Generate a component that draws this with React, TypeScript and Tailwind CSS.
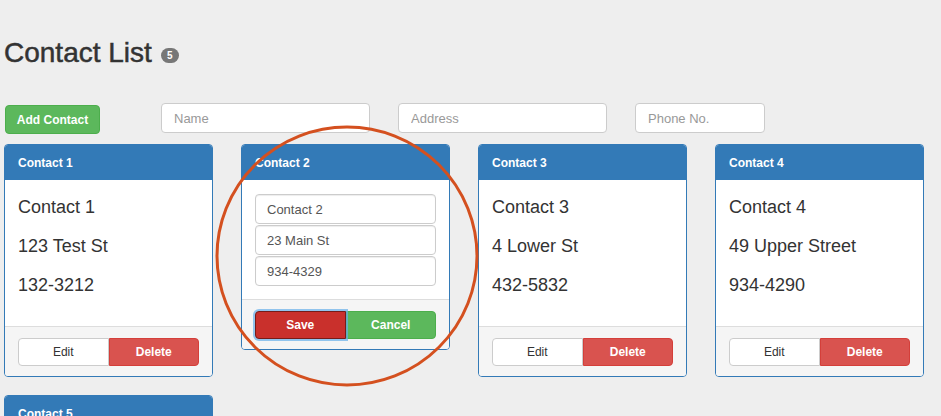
import React from 'react';

type Contact = { name: string; address: string; phone: string };

const contacts: Contact[] = [
  { name: 'Contact 1', address: '123 Test St', phone: '132-3212' },
  { name: 'Contact 2', address: '23 Main St', phone: '934-4329' },
  { name: 'Contact 3', address: '4 Lower St', phone: '432-5832' },
  { name: 'Contact 4', address: '49 Upper Street', phone: '934-4290' },
  { name: 'Contact 5', address: '', phone: '' },
];

const ViewCard = ({ c }: { c: Contact }) => (
  <div className="overflow-hidden rounded-[4px] border border-[#337ab7] bg-white">
    <div className="flex h-[35px] items-center bg-[#337ab7] px-[13px] text-[12px] font-bold text-white">{c.name}</div>
    <div className="px-[13px] pt-[8px] pb-[21px] text-[18px] text-[#333]">
      <div className="h-[39px] leading-[39px]">{c.name}</div>
      <div className="h-[39px] leading-[39px]">{c.address}</div>
      <div className="h-[39px] leading-[39px]">{c.phone}</div>
    </div>
    <div className="flex border-t border-[#dddddd] bg-[#f5f5f5] px-[13px] pt-[11px] pb-[10px]">
      <button className="h-[28px] flex-1 rounded-l-[4px] border border-[#cccccc] bg-white text-[12px] text-[#333]">Edit</button>
      <button className="h-[28px] flex-1 rounded-r-[4px] border border-[#d43f3a] bg-[#d9534f] text-[12px] font-bold text-white">Delete</button>
    </div>
  </div>
);

const EditCard = ({ c }: { c: Contact }) => (
  <div className="overflow-hidden rounded-[4px] border border-[#337ab7] bg-white">
    <div className="flex h-[35px] items-center bg-[#337ab7] px-[13px] text-[12px] font-bold text-white">{c.name}</div>
    <div className="flex flex-col gap-[1px] px-[13px] pt-[14px] pb-[13px]">
      {[c.name, c.address, c.phone].map((v) => (
        <input
          key={v}
          defaultValue={v}
          className="h-[30px] w-full rounded-[4px] border border-[#cccccc] bg-white pl-[11px] text-[13px] text-[#555] shadow-[inset_0_1px_1px_rgba(0,0,0,0.075)] outline-none"
        />
      ))}
    </div>
    <div className="flex border-t border-[#dddddd] bg-[#f5f5f5] px-[13px] pt-[11px] pb-[10px]">
      <button className="relative z-10 h-[28px] flex-1 rounded-l-[4px] border border-[#761c19] bg-[#c9302c] text-[12px] font-bold text-white shadow-[0_0_0_2px_rgba(102,175,233,0.7)]">Save</button>
      <button className="h-[28px] flex-1 rounded-r-[4px] border border-[#4cae4c] bg-[#5cb85c] text-[12px] font-bold text-white">Cancel</button>
    </div>
  </div>
);

export default function App() {
  return (
    <div className="relative h-[416px] overflow-hidden bg-[#eeeeee] font-['Liberation_Sans',Arial,sans-serif] text-[#333]">
      <div className="pt-[37px] pl-[4px]">
        <h1 className="flex items-center text-[28px] leading-[31px] font-normal text-[#333] [-webkit-text-stroke:0.5px_#333]">
          Contact List
          <span className="mt-[6px] ml-[9px] flex h-[15px] w-[18px] items-center justify-center rounded-full bg-[#777777] text-[10px] leading-none font-bold text-white [-webkit-text-stroke:0]">5</span>
        </h1>

        <div className="mt-[35px] flex items-start">
          <button className="mt-[2px] ml-[1px] h-[29px] w-[95px] rounded-[4px] border border-[#4cae4c] bg-[#5cb85c] text-[12px] font-bold text-white">Add Contact</button>
          <input placeholder="Name" className="ml-[61px] h-[30px] w-[209px] rounded-[4px] border border-[#cccccc] bg-white pl-[12px] text-[13px] outline-none placeholder:text-[#999]" />
          <input placeholder="Address" className="ml-[28px] h-[30px] w-[209px] rounded-[4px] border border-[#cccccc] bg-white pl-[12px] text-[13px] outline-none placeholder:text-[#999]" />
          <input placeholder="Phone No." className="ml-[28px] h-[30px] w-[130px] rounded-[4px] border border-[#cccccc] bg-white pl-[12px] text-[13px] outline-none placeholder:text-[#999]" />
        </div>

        <div className="mt-[10px] grid grid-cols-[209px_209px_209px_209px] items-start gap-x-[28px] gap-y-[18px]">
          {contacts.map((c, i) => (i === 1 ? <EditCard key={c.name} c={c} /> : <ViewCard key={c.name} c={c} />))}
        </div>
      </div>

      <svg className="pointer-events-none absolute inset-0" width="941" height="416" viewBox="0 0 941 416">
        <ellipse cx="347" cy="256" rx="130" ry="129" fill="none" stroke="#d4501f" strokeWidth="3" />
      </svg>
    </div>
  );
}
